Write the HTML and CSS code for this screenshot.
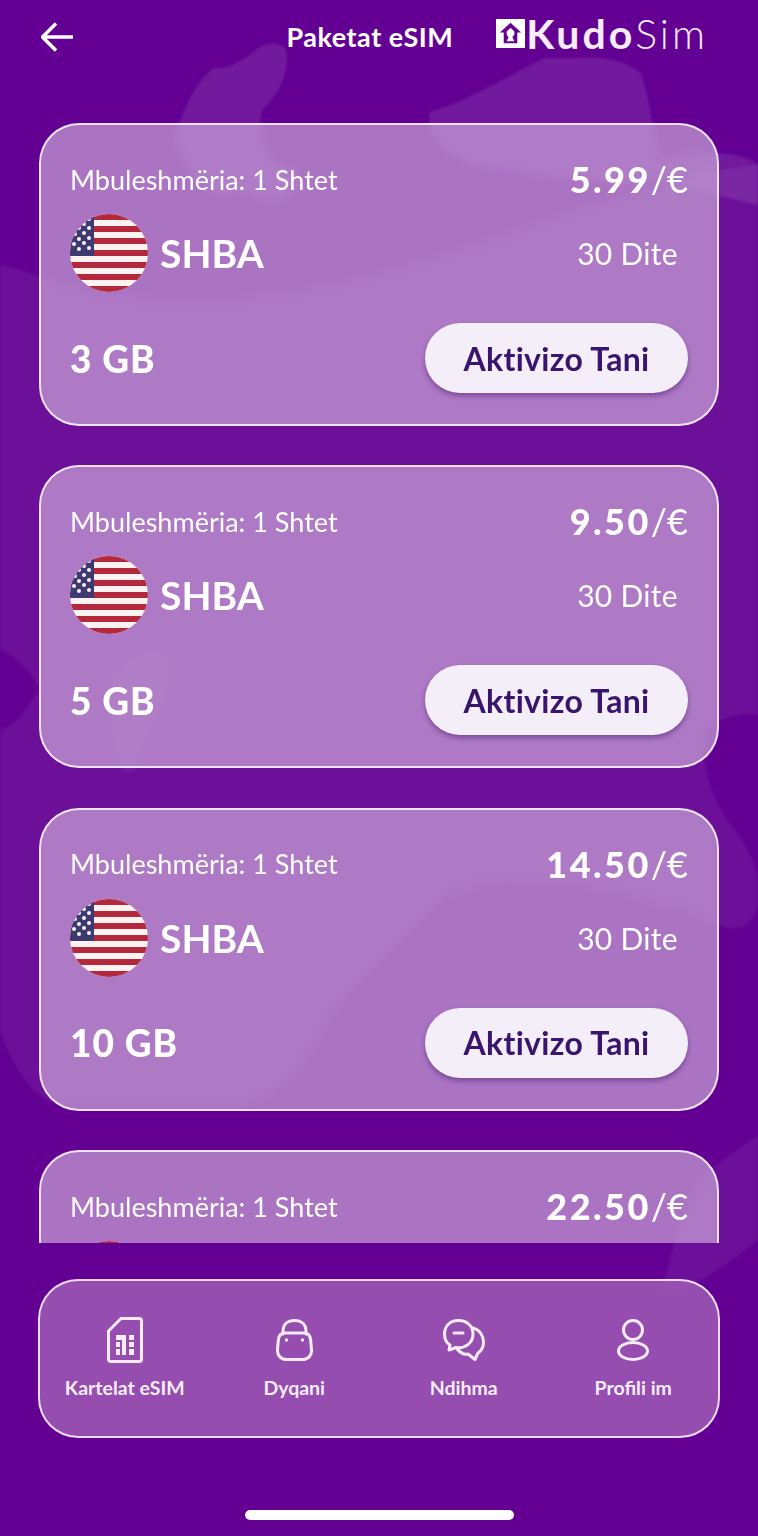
FILE: index.html
```html
<!DOCTYPE html>
<html lang="en"><head>
  <meta charset="UTF-8"/>
  <meta name="viewport" content="width=device-width,initial-scale=1"/>
  <title>Paketat eSIM</title>
  <link rel="stylesheet" href="styles.css">
</head><body>
  <svg class="defs" width="0" height="0">
    <defs>
      <clipPath id="flag-clip"><circle cx="39" cy="39" r="39"/></clipPath>
      <symbol id="flag-us" viewBox="0 0 78 78">
        <g clip-path="url(#flag-clip)">
          <rect width="78" height="78" fill="#fdf2f2"/>
          <g fill="#b4283c">
            <rect y="0" width="78" height="6"/>
            <rect y="12" width="78" height="6"/>
            <rect y="24" width="78" height="6"/>
            <rect y="36" width="78" height="6"/>
            <rect y="48" width="78" height="6"/>
            <rect y="60" width="78" height="6"/>
            <rect y="72" width="78" height="6"/>
          </g>
          <rect width="31" height="42" x="-7" fill="#3e3a70"/>
          <g fill="#f6f2f8">
            <circle cx="19" cy="5" r="2"/><circle cx="14" cy="10" r="2"/>
            <circle cx="9" cy="14" r="2"/><circle cx="19" cy="14" r="2"/>
            <circle cx="14" cy="19" r="2"/><circle cx="5" cy="20" r="2"/>
            <circle cx="9" cy="25" r="2"/><circle cx="19" cy="24" r="2"/>
            <circle cx="14" cy="29" r="2"/><circle cx="4" cy="30" r="2"/>
            <circle cx="9" cy="35" r="2"/><circle cx="19" cy="34" r="2"/>
          </g>
        </g>
      </symbol>
    </defs>
  </svg>

  <div class="screen">
    <svg class="map" viewBox="0 0 758 1536" width="758" height="1536">
      <path class="land-soft" d="M0 265C40 270 60 300 200 300C400 300 600 180 758 165V715C735 712 715 722 705 730C700 760 710 800 735 830C750 850 758 870 758 880V905C740 960 700 900 660 905C600 880 480 870 440 900L340 1000C300 1080 270 1105 230 1105H60C30 1100 10 1060 0 1030V730C20 725 30 700 40 690C30 670 15 655 0 650Z"/>
      <path class="land-soft" d="M105 690C120 650 150 640 172 655C180 690 150 730 135 770C120 780 110 760 105 690Z"/>
      <path class="land-soft" d="M700 1180C720 1160 745 1145 758 1135V1240C735 1260 690 1290 660 1300C670 1260 680 1210 700 1180Z"/>
      <path class="land" d="M176 135C186 100 200 78 214 68C228 70 238 62 250 55C262 42 278 40 286 50C290 72 278 96 262 110C256 135 262 165 300 175C305 200 270 205 240 190C215 200 190 190 176 135Z"/>
      <path class="land" d="M430 112C470 100 500 80 545 58C580 60 610 50 640 72C652 100 650 130 660 160C700 150 740 150 758 165V205C720 195 690 190 650 178C600 190 530 170 480 165C450 160 425 135 430 112Z"/>
    </svg>

    <header class="topbar">
      <svg class="back" viewBox="0 0 32 30" width="32" height="30">
        <path d="M15 1.500L1.500 15L15 28.500M1.500 15H32"/>
      </svg>
      <div class="page-title">Paketat eSIM</div>
      <div class="logo">
        <svg class="logo-mark" viewBox="0 0 30 30" width="29" height="29">
          <path fill-rule="evenodd" d="M0 0H30V30H0ZM15 4L26 14H22V25H8V14H4ZM15 9L19 13V16L17 19L19 23H11L13 19L11 16V13Z"/>
        </svg>
        <span class="logo-text">Kudo<span class="logo-thin">Sim</span></span>
      </div>
    </header>

    <main class="packages">
      <section class="card">
        <div class="row row-top">
          <span class="coverage">Mbuleshmëria: 1 Shtet</span>
          <span class="price"><b>5.99</b>/€</span>
        </div>
        <div class="row row-mid">
          <span class="country"><svg class="flag"><use href="#flag-us"/></svg>SHBA</span>
          <span class="days">30 Dite</span>
        </div>
        <div class="row row-bottom">
          <span class="data">3 GB</span>
          <button class="activate">Aktivizo Tani</button>
        </div>
      </section>
      <section class="card">
        <div class="row row-top">
          <span class="coverage">Mbuleshmëria: 1 Shtet</span>
          <span class="price"><b>9.50</b>/€</span>
        </div>
        <div class="row row-mid">
          <span class="country"><svg class="flag"><use href="#flag-us"/></svg>SHBA</span>
          <span class="days">30 Dite</span>
        </div>
        <div class="row row-bottom">
          <span class="data">5 GB</span>
          <button class="activate">Aktivizo Tani</button>
        </div>
      </section>
      <section class="card">
        <div class="row row-top">
          <span class="coverage">Mbuleshmëria: 1 Shtet</span>
          <span class="price"><b>14.50</b>/€</span>
        </div>
        <div class="row row-mid">
          <span class="country"><svg class="flag"><use href="#flag-us"/></svg>SHBA</span>
          <span class="days">30 Dite</span>
        </div>
        <div class="row row-bottom">
          <span class="data">10 GB</span>
          <button class="activate">Aktivizo Tani</button>
        </div>
      </section>
      <section class="card">
        <div class="row row-top">
          <span class="coverage">Mbuleshmëria: 1 Shtet</span>
          <span class="price"><b>22.50</b>/€</span>
        </div>
        <div class="row row-mid">
          <span class="country"><svg class="flag"><use href="#flag-us"/></svg></span>
        </div>
      </section>
    </main>

    <nav class="tabbar">
      <a class="tab">
        <span class="tab-slot">
          <svg class="tab-icon" viewBox="0 0 36 46" width="36" height="46">
            <path d="M14 1.500H32Q34.500 1.500 34.500 4V42Q34.500 44.500 32 44.500H4Q1.500 44.500 1.500 42V14Z"/>
            <path class="solid" d="M9 18H19V38H15V23H9ZM9 25H13V30H9ZM9 32H13V38H9ZM22 18H27V23H22ZM22 25H27V30H22ZM22 32H27V38H22Z"/>
          </svg>
        </span>
        <span class="tab-label">Kartelat eSIM</span>
      </a>
      <a class="tab">
        <span class="tab-slot">
          <svg class="tab-icon" viewBox="0 0 37 42" width="37" height="42">
            <path d="M7 15V12C7 5 12 1.500 18.500 1.500C25 1.500 30 5 30 12V15"/>
            <path d="M9 14H28C32 14 34 17 34.500 20L35.500 30C36 37 32 40.500 26 40.500H11C5 40.500 1 37 1.500 30L2.500 20C3 17 5 14 9 14Z"/>
            <circle class="solid" cx="10.500" cy="21" r="1.700"/>
            <circle class="solid" cx="26.500" cy="21" r="1.700"/>
          </svg>
        </span>
        <span class="tab-label">Dyqani</span>
      </a>
      <a class="tab">
        <span class="tab-slot">
          <svg class="tab-icon" viewBox="0 0 42 42" width="42" height="42">
            <path d="M15.500 1.500C7 1.500 1.500 7 1.500 15C1.500 20 3.500 24 7 26L6 31L13 28.500C22 30 30 24 30 15C30 7 24 1.500 15.500 1.500Z"/>
            <path d="M30 9C37 11 40.500 17 40.500 23C40.500 28 38 32 35 34L32 40.500L25 35C21 36 17 34 13 28.500"/>
            <path d="M11 14H20"/>
          </svg>
        </span>
        <span class="tab-label">Ndihma</span>
      </a>
      <a class="tab">
        <span class="tab-slot">
          <svg class="tab-icon" viewBox="0 0 32 42" width="32" height="42">
            <circle cx="16" cy="11" r="9.500"/>
            <ellipse cx="16" cy="32" rx="14.500" ry="8.500"/>
          </svg>
        </span>
        <span class="tab-label">Profili im</span>
      </a>
    </nav>

    <div class="home-bar"></div>
  </div>
</body></html>
```

FILE: styles.css
```css
:root {
  --bg:        #630093;
  --ink:       #3a1570;
  --soft:      #f6ecfb;
  --card-bg:   rgba(208,176,220,0.66);
  --nav-bg:    rgba(157,91,180,0.85);
  --edge:      rgba(255,255,255,0.8);
}
* {box-sizing:border-box}
body {margin:0;background:var(--bg);color:#fff;font-family:'Lato','Noto Sans',sans-serif}
.defs {position:absolute}
.screen {position:relative;width:758px;height:1536px;overflow:hidden;display:flex;flex-direction:column;background:var(--bg)}
.map {position:absolute;left:0;top:0;filter:blur(1px)}
.land {fill:rgba(255,255,255,0.1)}
.land-soft {fill:rgba(255,255,255,0.06)}

.topbar {position:relative;height:123px;flex:none;display:flex;align-items:flex-start;padding:22px 50px 0 41px}
.back {fill:none;stroke:#fff;stroke-width:3.5}
.page-title {margin-left:auto;margin-top:-1px;font-size:27px;line-height:32px;font-weight:700;letter-spacing:0.5px}
.logo {display:flex;align-items:center;gap:1px;margin-left:43px;margin-top:-3px;height:29px}
.logo-mark {fill:#fff;flex:none}
.logo-text {font-size:41px;line-height:30px;font-weight:700;letter-spacing:3px;color:var(--soft)}
.logo-thin {font-weight:300}

.packages {position:relative;height:1120px;flex:none;overflow:hidden;padding:0 39px;display:flex;flex-direction:column;gap:39.4px}
.card {flex:none;height:303px;padding:33px 29px 32px;border:2px solid var(--edge);border-radius:40px;background:var(--card-bg);backdrop-filter:blur(4px)}
.row {display:flex;justify-content:space-between;align-items:center}
.row-top {height:42px}
.row-mid {height:78px;margin-top:14px}
.row-bottom {height:70px;margin-top:31px}
.coverage {font-size:27px;font-weight:400}
.price {font-size:36px;font-weight:400}
.price b {font-weight:900;letter-spacing:2.500px}
.country {display:flex;align-items:center;gap:12px;font-size:39px;font-weight:700}
.flag {width:78px;height:78px;filter:blur(0.5px)}
.days {font-size:30px;letter-spacing:0.3px;margin-right:10px}
.data {font-size:37px;font-weight:900;letter-spacing:1px}
.activate {width:263px;height:70px;border:none;border-radius:35px;background:#f3eef7;color:var(--ink);
           font-family:inherit;font-size:32px;font-weight:700;letter-spacing:0.3px;box-shadow:0 3px 5px rgba(60,20,100,0.45)}

.tabbar {position:relative;flex:none;width:682px;height:159px;margin:36px 0 0 38px;border:2px solid var(--edge);
         border-radius:40px;background:var(--nav-bg);display:grid;grid-template-columns:repeat(4,1fr)}
.tab {display:flex;flex-direction:column;align-items:center;padding-top:36px;color:var(--soft);font-size:19.500px;font-weight:700}
.tab-slot {height:46px;display:flex;align-items:center}
.tab-label {margin-top:13px}
.tab-icon {fill:none;stroke:var(--soft);stroke-width:3;stroke-linejoin:round;stroke-linecap:round}
.tab-icon .solid {fill:var(--soft);stroke:none}

.home-bar {position:absolute;left:245px;bottom:16px;width:269px;height:10px;border-radius:5px;background:#fff}
```
